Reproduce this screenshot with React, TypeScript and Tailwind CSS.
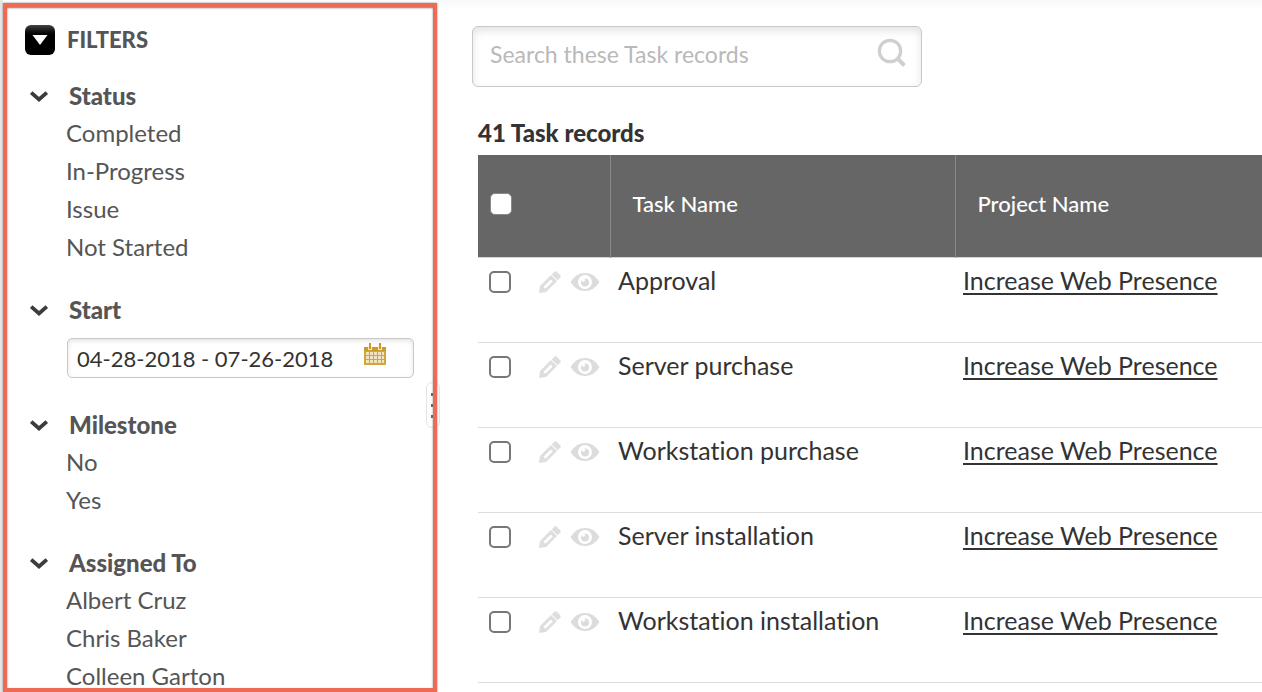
import { useState } from "react";

const statuses = ["Completed", "In-Progress", "Issue", "Not Started"];
const milestones = ["No", "Yes"];
const people = ["Albert Cruz", "Chris Baker", "Colleen Garton"];

const tasks = [
  { name: "Approval", project: "Increase Web Presence" },
  { name: "Server purchase", project: "Increase Web Presence" },
  { name: "Workstation purchase", project: "Increase Web Presence" },
  { name: "Server installation", project: "Increase Web Presence" },
  { name: "Workstation installation", project: "Increase Web Presence" },
];

function Chevron() {
  return (
    <svg width="20" height="14" viewBox="0 0 20 14" fill="none" className="shrink-0">
      <path d="M2.2 3.6 L10 10.4 L17.8 3.6" stroke="#3c3c3c" strokeWidth="3.8" />
    </svg>
  );
}

function CalendarIcon() {
  return (
    <svg width="24" height="24" viewBox="0 0 24 24" className="shrink-0">
      <rect x="1" y="5" width="22" height="18" fill="#d2a63a" />
      <rect x="1" y="5" width="22" height="4" fill="#c99a2c" />
      <path d="M5 4h4v4H5zM15 4h4v4h-4z" fill="#f3e6c4" />
      <path d="M6 1h2v6H6zM16 1h2v6h-2z" fill="#c99a2c" />
      <g fill="#f3e4bd">
        <path d="M3 10h3v3H3zM7 10h3v3H7zM11 10h3v3h-3zM15 10h3v3h-3zM19 10h2v3h-2z" />
        <path d="M3 14h3v3H3zM7 14h3v3H7zM11 14h3v3h-3zM15 14h3v3h-3zM19 14h2v3h-2z" />
        <path d="M3 18h3v3H3zM7 18h3v3H7zM11 18h3v3h-3zM15 18h3v3h-3zM19 18h2v3h-2z" />
      </g>
    </svg>
  );
}

function SearchIcon() {
  return (
    <svg width="30" height="30" viewBox="0 0 30 30" fill="none" stroke="#cfcfcf">
      <circle cx="13" cy="13" r="10.7" strokeWidth="3.2" />
      <path d="M20.5 20.5 L27.5 27.5" strokeWidth="4" />
    </svg>
  );
}

function PencilIcon() {
  return (
    <svg width="24" height="24" viewBox="0 0 24 24" fill="#dedede">
      <path
        fillRule="evenodd"
        d="M1 23 L2 16 L13 5 L19 11 L8 22 Z M5.4 16.8 L7.4 18.8 L14.8 11.4 L12.8 9.4 Z"
      />
      <path d="M13.7 4.4 L16.6 1.6 Q17.6 0.8 18.6 1.6 L22.4 5.4 Q23.2 6.4 22.4 7.4 L19.6 10.3 Z" />
    </svg>
  );
}

function EyeIcon() {
  return (
    <svg width="30" height="20" viewBox="0 0 30 20">
      <path d="M0.5 10 Q6 1 15 1 Q24 1 29.5 10 Q24 19 15 19 Q6 19 0.5 10 Z" fill="#dcdcdc" />
      <circle cx="15" cy="10" r="7" fill="#fff" />
      <circle cx="15" cy="10.4" r="4" fill="#dcdcdc" />
      <circle cx="13.4" cy="8" r="1.8" fill="#fff" />
    </svg>
  );
}

function GroupTitle({ title }: { title: string }) {
  return (
    <h3>
      <button className="flex items-center gap-5 text-2xl leading-[37px] font-black cursor-pointer">
        <Chevron />
        {title}
      </button>
    </h3>
  );
}

function FilterGroup({ title, items }: { title: string; items: string[] }) {
  return (
    <section>
      <GroupTitle title={title} />
      <ul className="pl-[37px]">
        {items.map((item) => (
          <li key={item}>
            <a href="#" className="block text-2xl leading-[38px]">
              {item}
            </a>
          </li>
        ))}
      </ul>
    </section>
  );
}

export default function App() {
  const [range, setRange] = useState("04-28-2018 - 07-26-2018");
  const [query, setQuery] = useState("");

  return (
    <div className="flex h-screen overflow-hidden bg-white font-['Lato',sans-serif] text-[#333] [font-variant-ligatures:none]">
      <div className="relative flex shrink-0 border-l-3 border-[#e6e6e6] pt-[3px]">
        <button
          aria-label="Resize filters"
          className="absolute top-[382px] -right-[3px] flex h-[46px] w-[14px] flex-col items-center justify-center gap-2 rounded-md border border-[#e4e4e4] bg-white pr-px"
        >
          <span className="size-[3px] bg-[#666]" />
          <span className="size-[3px] bg-[#666]" />
          <span className="size-[3px] bg-[#666]" />
        </button>
        <aside className="relative w-[434px] overflow-hidden border-4 border-[#ed6a55] pr-[19px] pl-[22px] text-[#555] shadow-[0_0_2px_#888,inset_0_1px_2px_#777]">
          <div className="flex items-center gap-3 pt-4 pb-5">
            <button
              aria-label="Toggle filters"
              className="-ml-1 flex size-[30px] items-center justify-center rounded-md bg-linear-to-b from-[#444] via-black via-40% to-black"
            >
              <svg width="16" height="12" viewBox="0 0 16 12" fill="#fff">
                <path d="M0.5 1h15L8 11z" />
              </svg>
            </button>
            <h2 className="text-[22px] leading-[34px] font-black">FILTERS</h2>
          </div>
          <div className="flex flex-col gap-[25px]">
            <FilterGroup title="Status" items={statuses} />
            <section>
              <GroupTitle title="Start" />
              <div className="mt-[10px] mb-[3px] ml-[38px] flex h-10 items-center rounded-[5px] border border-[#c8c8c8] pr-[26px] pl-[9px] shadow-[inset_0_2px_5px_#e4e4e4]">
                <input
                  aria-label="Start"
                  value={range}
                  onChange={(e) => setRange(e.target.value)}
                  className="min-w-0 flex-1 bg-transparent text-[22px] text-[#333] outline-none"
                />
                <button aria-label="Choose dates" className="pb-2">
                  <CalendarIcon />
                </button>
              </div>
            </section>
            <FilterGroup title="Milestone" items={milestones} />
            <FilterGroup title="Assigned To" items={people} />
          </div>
        </aside>
      </div>

      <main className="min-w-0 flex-1 bg-linear-to-b from-[#f8f8f8] to-white to-[10px] pt-[26px] pl-[35px]">
        <div className="flex h-[61px] w-[450px] items-center rounded-md border border-[#c8c8c8] pr-[14px] pb-1 pl-[17px] shadow-[inset_0_4px_8px_#e4e4e4]">
          <input
            aria-label="Search these Task records"
            placeholder="Search these Task records"
            value={query}
            onChange={(e) => setQuery(e.target.value)}
            className="min-w-0 flex-1 bg-transparent text-[23px] outline-none placeholder:text-[#b9b9b9]"
          />
          <button aria-label="Search" className="pb-1">
            <SearchIcon />
          </button>
        </div>

        <div className="pt-[26px] pl-[6px]">
          <h1 className="pb-[2px] text-2xl leading-10 font-black">41 Task records</h1>
          <table className="w-full table-fixed border-collapse text-left">
            <thead>
              <tr className="h-[102px] border-b border-[#d4d4d4] bg-[#666] text-[22px] text-white">
                <th className="w-[132px] border-r border-[#8a8a8a] pb-1 pl-3">
                  <input
                    type="checkbox"
                    aria-label="Select all"
                    className="block size-[22px] appearance-none rounded-[5px] border border-[#8a8a8a] bg-white checked:bg-[#333]"
                  />
                </th>
                <th className="w-[345px] border-r border-[#8a8a8a] pb-1 pl-[22px] font-medium">Task Name</th>
                <th className="pb-1 pl-[22px] font-medium">Project Name</th>
              </tr>
            </thead>
            <tbody>
              {tasks.map((task) => (
                <tr key={task.name} className="h-[85px] border-b border-[#ddd] align-top text-[25px] leading-[30px]">
                  <td className="pt-3 pl-[11px]">
                    <div className="flex items-center">
                      <input
                        type="checkbox"
                        aria-label={`Select ${task.name}`}
                        className="size-[22px] shrink-0 appearance-none rounded-[5px] border-2 border-[#777] bg-white checked:bg-[#333]"
                      />
                      <button aria-label={`Edit ${task.name}`} className="ml-[27px] shrink-0">
                        <PencilIcon />
                      </button>
                      <button aria-label={`View ${task.name}`} className="ml-2 shrink-0">
                        <EyeIcon />
                      </button>
                    </div>
                  </td>
                  <td className="pt-[7px] pl-2">{task.name}</td>
                  <td className="pt-[7px] pl-2">
                    <a href="#" className="underline decoration-2 underline-offset-3">
                      {task.project}
                    </a>
                  </td>
                </tr>
              ))}
            </tbody>
          </table>
        </div>
      </main>
    </div>
  );
}
